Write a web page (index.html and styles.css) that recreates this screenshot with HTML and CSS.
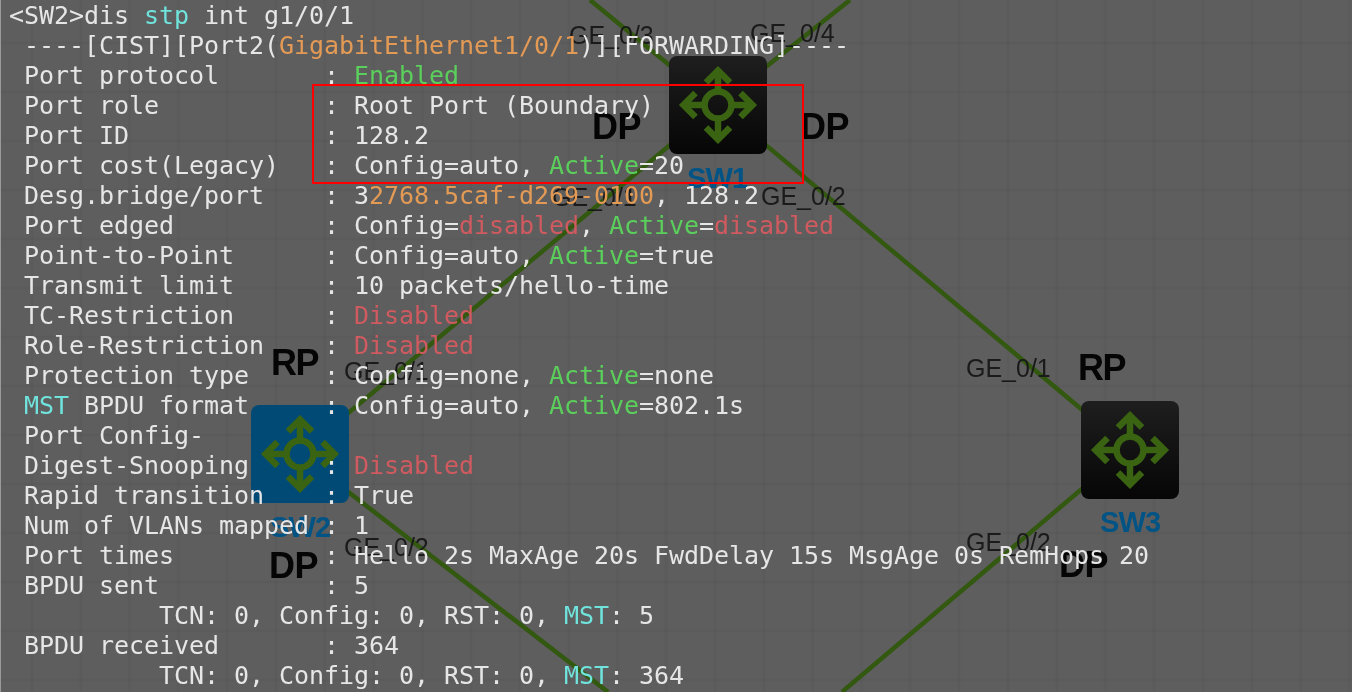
FILE: index.html
```html
<!DOCTYPE html>
<html lang="en">
<head>
<meta charset="utf-8">
<title>dis stp int g1/0/1</title>
<link rel="stylesheet" href="styles.css">
</head>
<body>
<main class="stage">
  <div class="diagram">
    <svg class="links" width="1352" height="692" viewBox="0 0 1352 692" aria-hidden="true">
      <line x1="590" y1="0" x2="718" y2="105"/>
      <line x1="850" y1="0" x2="718" y2="105"/>
      <line x1="718" y1="105" x2="299" y2="454"/>
      <line x1="718" y1="105" x2="1129" y2="449"/>
      <line x1="299" y1="454" x2="608" y2="692"/>
      <line x1="1129" y1="449" x2="842" y2="692"/>
    </svg>

    <svg width="0" height="0" class="defs" aria-hidden="true">
      <symbol id="switch" viewBox="-49 -49 98 98">
        <g fill="none" stroke="#3a6412" stroke-width="6.5">
          <circle r="13.5"/>
          <path d="M0-14V-33M0 14V33M-14 0H-33M14 0H33"/>
          <path d="M-12-22.500 0-34.500 12-22.500M-12 22.500 0 34.500 12 22.500M-22.500-12-34.500 0-22.500 12M22.500-12 34.500 0 22.500 12"/>
        </g>
      </symbol>
    </svg>

    <div class="node node-sw1"><svg class="node-icon"><use href="#switch"/></svg></div>
    <div class="node node-sw2"><svg class="node-icon"><use href="#switch"/></svg></div>
    <div class="node node-sw3"><svg class="node-icon"><use href="#switch"/></svg></div>

    <span class="name name-sw1">SW1</span>
    <span class="name name-sw2">SW2</span>
    <span class="name name-sw3">SW3</span>

    <span class="port p1">GE_0/3</span>
    <span class="port p2">GE_0/4</span>
    <span class="port p3">GE_0/1</span>
    <span class="port p4">GE_0/2</span>
    <span class="port p5">GE_0/1</span>
    <span class="port p6">GE_0/2</span>
    <span class="port p7">GE_0/1</span>
    <span class="port p8">GE_0/2</span>

    <span class="role r1">DP</span>
    <span class="role r2">DP</span>
    <span class="role r3">RP</span>
    <span class="role r4">DP</span>
    <span class="role r5">RP</span>
    <span class="role r6">DP</span>
  </div>

  <pre class="terminal">&lt;SW2&gt;dis <span class="cy">stp</span> int g1/0/1
 ----[CIST][Port2(<span class="or">GigabitEthernet1/0/1</span>)][FORWARDING]----
 Port protocol       : <span class="gr">Enabled</span>
 Port role           : Root Port (Boundary)
 Port ID             : 128.2
 Port cost(Legacy)   : Config=auto, <span class="gr">Active</span>=20
 Desg.bridge/port    : 3<span class="or">2768.5caf-d269-0100</span>, 128.2
 Port edged          : Config=<span class="rd">disabled</span>, <span class="gr">Active</span>=<span class="rd">disabled</span>
 Point-to-Point      : Config=auto, <span class="gr">Active</span>=true
 Transmit limit      : 10 packets/hello-time
 TC-Restriction      : <span class="rd">Disabled</span>
 Role-Restriction    : <span class="rd">Disabled</span>
 Protection type     : Config=none, <span class="gr">Active</span>=none
 <span class="cy">MST</span> BPDU format     : Config=auto, <span class="gr">Active</span>=802.1s
 Port Config-
 Digest-Snooping     : <span class="rd">Disabled</span>
 Rapid transition    : True
 Num of VLANs mapped : 1
 Port times          : Hello 2s MaxAge 20s FwdDelay 15s MsgAge 0s RemHops 20
 BPDU sent           : 5
          TCN: 0, Config: 0, RST: 0, <span class="cy">MST</span>: 5
 BPDU received       : 364
          TCN: 0, Config: 0, RST: 0, <span class="cy">MST</span>: 364</pre>

  <div class="highlight"></div>
</main>
</body>
</html>
```
FILE: styles.css
```css
html, body {
  margin: 0;
  padding: 0;
  background: #5e5e5e;
}

.stage {
  position: relative;
  width: 1352px;
  height: 692px;
  overflow: hidden;
  box-sizing: border-box;
  border-left: 1px solid #9a9a9a;
  background-color: #5e5e5e;
  background-image:
    linear-gradient(90deg, rgba(0, 0, 0, 0) 0, rgba(0, 0, 0, 0.035) 1.5px, rgba(0, 0, 0, 0.035) 2.5px, rgba(0, 0, 0, 0) 4px),
    linear-gradient(180deg, rgba(0, 0, 0, 0) 0, rgba(0, 0, 0, 0.035) 1.5px, rgba(0, 0, 0, 0.035) 2.5px, rgba(0, 0, 0, 0) 4px);
  background-size: 48.8px 49px;
  background-position: 29px 41px;
}

.diagram {
  position: absolute;
  left: -1px;
  top: 0;
  width: 1352px;
  height: 692px;
  filter: blur(0.4px);
}

.links, .defs {
  position: absolute;
  left: 0;
  top: 0;
}

.links line {
  stroke: #335810;
  stroke-width: 4.5;
}

.node {
  position: absolute;
  width: 98px;
  height: 98px;
  border-radius: 8px;
  background: linear-gradient(180deg, #1e1e1e, #060606);
}

.node-icon {
  display: block;
  width: 98px;
  height: 98px;
}

.node-sw1 { left: 669px; top: 56px; }
.node-sw2 { left: 251px; top: 405px; background: #004a75; }
.node-sw3 { left: 1081px; top: 401px; }

.name {
  position: absolute;
  font: bold 29px/32px "Liberation Sans", Arial, sans-serif;
  letter-spacing: -0.8px;
  color: #005485;
}

.name-sw1 { left: 687px; top: 162px; }
.name-sw2 { left: 270px; top: 511px; }
.name-sw3 { left: 1100px; top: 506px; }

.port {
  position: absolute;
  font: 25px/30px "Liberation Sans", Arial, sans-serif;
  color: #1a1a1a;
}

.p1 { left: 569px; top: 20px; }
.p2 { left: 750px; top: 18px; }
.p3 { left: 552px; top: 182px; }
.p4 { left: 761px; top: 181px; }
.p5 { left: 344px; top: 356px; }
.p6 { left: 344px; top: 532px; }
.p7 { left: 966px; top: 353px; }
.p8 { left: 966px; top: 527px; }

.role {
  position: absolute;
  font: bold 36px/40px "Liberation Sans", Arial, sans-serif;
  letter-spacing: -0.5px;
  color: #050505;
}

.r1 { left: 592px; top: 107px; }
.r2 { left: 800px; top: 107px; }
.r3 { left: 271px; top: 343px; letter-spacing: -1.5px; }
.r4 { left: 269px; top: 546px; }
.r5 { left: 1078px; top: 348px; letter-spacing: -1.5px; }
.r6 { left: 1059px; top: 545px; }

.terminal {
  position: relative;
  margin: 0;
  padding: 1px 0 0 8px;
  font: 25px/30px "DejaVu Sans Mono", monospace;
  letter-spacing: -0.05px;
  color: #e6e6e6;
  white-space: pre;
  filter: blur(0.3px);
}

.cy { color: #6fe3dc; }
.or { color: #e39a55; }
.gr { color: #5bcf5b; }
.rd { color: #cf5a5f; }

.highlight {
  position: absolute;
  left: 311px;
  top: 84px;
  width: 488px;
  height: 96px;
  border: 2px solid #f00;
}
```
